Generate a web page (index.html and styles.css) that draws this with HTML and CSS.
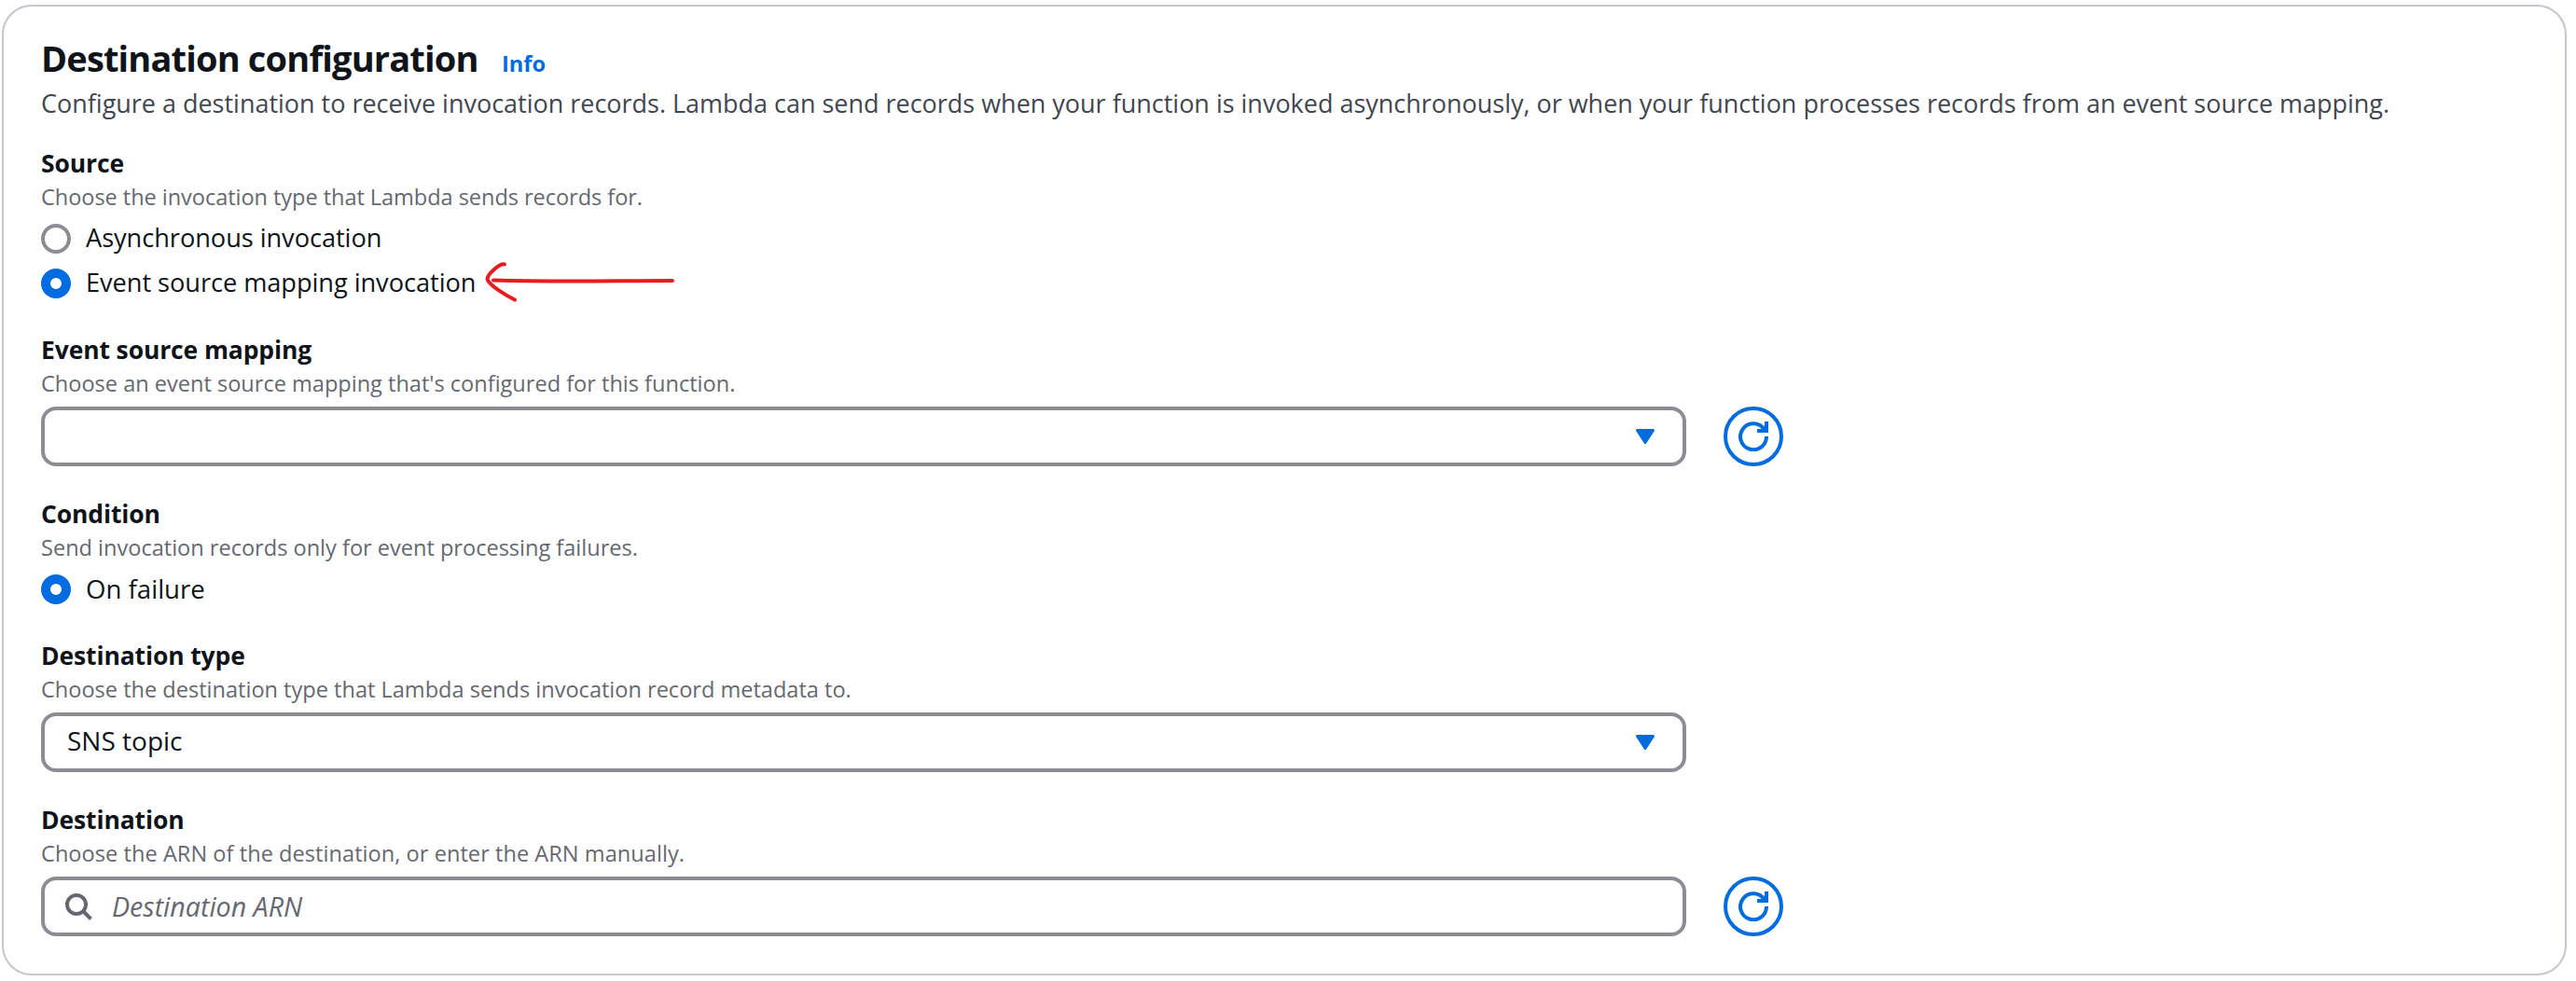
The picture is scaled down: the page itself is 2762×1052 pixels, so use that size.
FILE: index.html
```
<!DOCTYPE html>
<html lang="en">
<head>
<meta charset="utf-8">
<title>Destination configuration</title>
<link rel="stylesheet" href="styles.css">
</head>
<body>
<main class="card">
  <header class="card-header">
    <div class="title-row"><h1>Destination configuration</h1><a class="info">Info</a></div>
    <p class="description">Configure a destination to receive invocation records. Lambda can send records when your function is invoked asynchronously, or when your function processes records from an event source mapping.</p>
  </header>
  <form class="fields">
    <section class="field">
      <h2>Source</h2>
      <p class="hint hint-source">Choose the invocation type that Lambda sends records for.</p>
      <div class="radios">
        <label class="option"><span class="radio"></span><span class="option-text">Asynchronous invocation</span></label>
        <label class="option"><span class="radio checked"></span><span class="option-text">Event source mapping invocation</span>
          <svg class="pointer" width="208" height="50" viewBox="0 0 208 50">
            <path d="M204 23C140 23 80 24.500 12 22.500M24 5.500C19 4 6 16 5.500 21C6 27 26 39 35 43.500"/>
          </svg>
        </label>
      </div>
    </section>
    <section class="field">
      <h2>Event source mapping</h2>
      <p class="hint">Choose an event source mapping that's configured for this function.</p>
      <div class="control-row">
        <div class="control">
          <span class="value"></span>
          <svg class="caret" width="20" height="16" viewBox="0 0 20 16"><path d="M1.500 1.500h17L10 14.500z"/></svg>
        </div>
        <button class="refresh" type="button" aria-label="Refresh"><svg width="32" height="32" viewBox="0 0 32 32"><path d="M30 16A14 14 0 1 1 28 9M30 0v10H20"/></svg></button>
      </div>
    </section>
    <section class="field">
      <h2>Condition</h2>
      <p class="hint">Send invocation records only for event processing failures.</p>
      <div class="radios">
        <label class="option"><span class="radio checked"></span><span class="option-text short">On failure</span></label>
      </div>
    </section>
    <section class="field">
      <h2>Destination type</h2>
      <p class="hint">Choose the destination type that Lambda sends invocation record metadata to.</p>
      <div class="control-row">
        <div class="control">
          <span class="value">SNS topic</span>
          <svg class="caret" width="20" height="16" viewBox="0 0 20 16"><path d="M1.500 1.500h17L10 14.500z"/></svg>
        </div>
      </div>
    </section>
    <section class="field">
      <h2>Destination</h2>
      <p class="hint hint-arn">Choose the ARN of the destination, or enter the ARN manually.</p>
      <div class="control-row">
        <div class="control search">
          <svg class="magnifier" width="32" height="32" viewBox="0 0 32 32"><circle cx="14" cy="14" r="10"/><path d="M21 21l8.500 8.500"/></svg>
          <span class="placeholder">Destination ARN</span>
        </div>
        <button class="refresh" type="button" aria-label="Refresh"><svg width="32" height="32" viewBox="0 0 32 32"><path d="M30 16A14 14 0 1 1 28 9M30 0v10H20"/></svg></button>
      </div>
    </section>
  </form>
</main>
</body>
</html>
```
FILE: styles.css
```
* { box-sizing: border-box; }
body {
  margin: 0;
  padding: 5px 10px 0 2px;
  background: #fff;
  color: #0f141a;
  font-family: "Open Sans", "Noto Sans", sans-serif;
}
h1, h2, p { margin: 0; }
.card {
  height: 1041px;
  padding: 31px 40px 40px;
  border: 2px solid #c6c6cd;
  border-radius: 32px;
}
.title-row { display: flex; align-items: baseline; gap: 26px; height: 53px; }
h1 { width: 468px; font-size: 38px; line-height: 48px; letter-spacing: -0.84px; white-space: nowrap; }
.info { color: #006ce0; font-size: 23.6px; font-weight: 700; line-height: 32px; }
.description { color: #424650; font-size: 26.97px; line-height: 40px; white-space: nowrap; }
.fields { display: flex; flex-direction: column; gap: 32px; margin-top: 25px; }
h2 { margin-bottom: 1px; font-size: 26.5px; line-height: 38px; letter-spacing: -0.13px; }
.hint { color: #656871; font-size: 23.55px; line-height: 32px; }
.hint-source { letter-spacing: -0.05px; }
.hint-arn { letter-spacing: 0.05px; }
.radios { display: flex; flex-direction: column; gap: 16px; padding: 13px 0 4px; }
.option { position: relative; display: flex; align-items: flex-start; gap: 16px; height: 32px; }
.radio { width: 32px; height: 32px; border: 4px solid #8c8c94; border-radius: 50%; }
.radio.checked { border: 10px solid #006ce0; }
.option-text { font-size: 27.2px; line-height: 30px; letter-spacing: -0.05px; }
.option-text.short { font-size: 27.6px; letter-spacing: 0; }
.pointer { position: absolute; left: 473px; top: -10px; fill: none; stroke: #e81c1e; stroke-width: 4; stroke-linecap: round; stroke-linejoin: round; }
.control-row { display: flex; gap: 40px; margin-top: 9px; }
.control {
  display: flex;
  align-items: center;
  justify-content: space-between;
  width: 1764px;
  height: 64px;
  padding: 0 30px 0 24px;
  border: 4px solid #8c8c94;
  border-radius: 16px;
}
.value { padding-bottom: 4px; font-size: 28px; line-height: 40px; }
.caret { fill: #006ce0; stroke: #006ce0; stroke-width: 3; stroke-linejoin: round; }
.search { justify-content: flex-start; gap: 20px; padding-left: 20px; }
.magnifier { fill: none; stroke: #656871; stroke-width: 4; }
.placeholder { padding-bottom: 1px; color: #656871; font-size: 28.6px; font-style: italic; line-height: 40px; }
.refresh {
  display: grid;
  place-items: center;
  width: 64px;
  height: 64px;
  padding: 0;
  border: 4px solid #006ce0;
  border-radius: 50%;
  background: #fff;
}
.refresh svg { fill: none; stroke: #006ce0; stroke-width: 4; }
```
